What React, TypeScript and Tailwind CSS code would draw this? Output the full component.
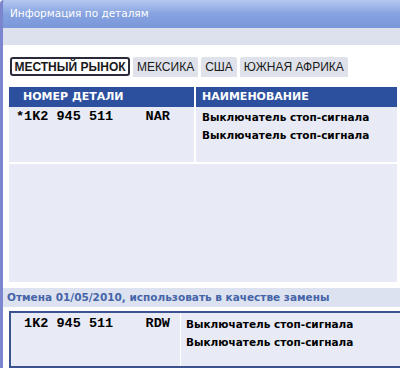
const tabs = ['МЕКСИКА', 'США', 'ЮЖНАЯ АФРИКА'];

export default function App() {
  return (
    <div className="w-[400px] h-[368px] overflow-hidden bg-white flex flex-col font-['DejaVu_Sans',sans-serif]">
      {/* Title bar */}
      <div className="h-[28px] shrink-0 flex items-center pl-[7px] bg-gradient-to-b from-[#b6c8f0] via-[#86a2e0] to-[#7a97da] border-l-[3px] border-[#7b86cf] rounded-tl-[4px]">
        <span className="text-[10.5px] text-white">Информация по деталям</span>
      </div>

      <div className="flex-1 flex">
        <div className="w-[3px] bg-[#7b86cf]" />
        <div className="flex-1 flex flex-col">
          <div className="h-[17px] bg-[#dde1ee]" />

          {/* Tabs */}
          <div className="h-[42px] pt-[12px] pl-[7px] flex items-start gap-[3px] font-['Liberation_Sans',sans-serif] text-[12px] text-[#1a1a1a]">
            <div className="h-[19px] w-[120px] flex items-center justify-center bg-white border-2 border-[#2a2a3a] rounded-[3px] font-bold">
              МЕСТНЫЙ РЫНОК
            </div>
            {tabs.map((t) => (
              <div key={t} className="h-[20px] px-[4px] flex items-center bg-[#dfe2ea] rounded-t-[2px]">
                {t}
              </div>
            ))}
          </div>

          {/* Table */}
          <div className="ml-[6px] mr-[3px] flex flex-col">
            <div className="h-[20px] flex bg-[#2d509e] text-white font-bold text-[11px]">
              <div className="w-[185px] pl-[14px] flex items-center">НОМЕР ДЕТАЛИ</div>
              <div className="w-[2px] bg-white" />
              <div className="flex-1 pl-[6px] flex items-center">НАИМЕНОВАНИЕ</div>
            </div>
            <div className="h-[55px] flex bg-[#e8ebf5] pt-[1px]">
              <div className="w-[185px] pl-[7px] font-['Liberation_Mono',monospace] font-bold text-[13.5px] leading-[18px] text-black whitespace-pre">
                *1K2 945 511    NAR
              </div>
              <div className="w-[2px] bg-white -mt-[1px]" />
              <div className="flex-1 pl-[6px] text-[10.5px] font-bold leading-[18px] text-black">
                <div>Выключатель стоп-сигнала</div>
                <div>Выключатель стоп-сигнала</div>
              </div>
            </div>
            <div className="h-[2px] bg-white" />
            <div className="h-[118px] bg-[#e8ebf5]" />
          </div>

          <div className="h-[6px]" />
          <div className="h-[19px] pl-[4px] flex items-center bg-[#dde2f0] text-[#4565a8] font-bold text-[10.5px]">
            Отмена 01/05/2010, использовать в качестве замены
          </div>
          <div className="h-[4px]" />

          {/* Replacement */}
          <div className="ml-[6px] flex-1 flex border-t-2 border-l-2 border-b-2 border-[#3b5390] bg-[#e8ebf5] pt-[2px]">
            <div className="w-[169px] pl-[5px] font-['Liberation_Mono',monospace] font-bold text-[13.5px] leading-[18px] text-black whitespace-pre">
              {' 1K2 945 511    RDW'}
            </div>
            <div className="w-[1px] bg-white -mt-[2px]" />
            <div className="flex-1 pl-[5px] text-[10.5px] font-bold leading-[18px] text-black">
              <div>Выключатель стоп-сигнала</div>
              <div>Выключатель стоп-сигнала</div>
            </div>
          </div>
        </div>
      </div>
    </div>
  );
}
